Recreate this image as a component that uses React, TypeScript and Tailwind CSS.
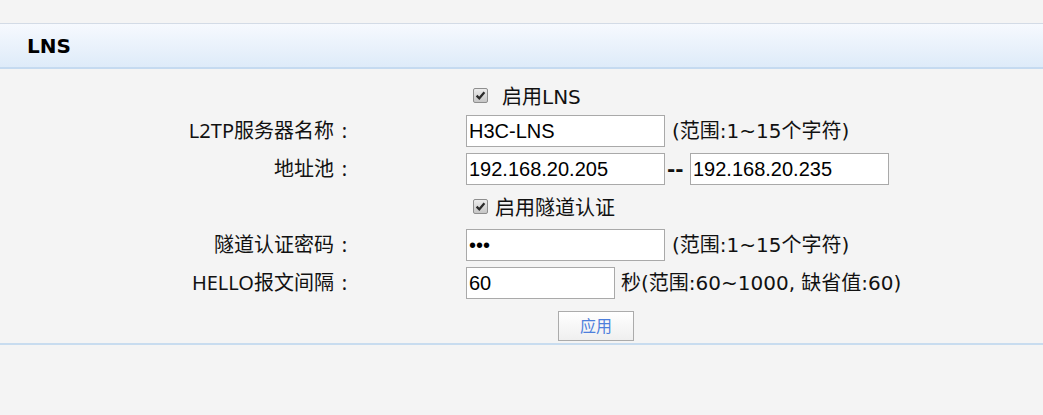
import React from "react";

const lbl = { fontFamily: '"Noto Sans", "Noto Sans CJK SC", sans-serif' };
const txt = { fontFamily: '"DejaVu Sans", "Noto Sans CJK SC", sans-serif' };
const inp = { fontFamily: '"Liberation Sans", "Noto Sans CJK SC", sans-serif' };

function Check() {
  return (
    <span className="inline-flex h-[15px] w-[15px] items-center justify-center rounded-[2px] border border-[#8e8e8e] bg-gradient-to-b from-[#ececec] to-[#c6c6c6]">
      <svg width="11" height="11" viewBox="0 0 11 11">
        <path d="M1.6 5.6 L4.3 8.3 L9.4 2.2" fill="none" stroke="#2a2a2a" strokeWidth="2.2" />
      </svg>
    </span>
  );
}

function Label({ children }: { children: React.ReactNode }) {
  return (
    <div
      className="flex w-[355px] shrink-0 justify-end text-[20px] leading-none text-[#111]"
      style={lbl}
    >
      <span>{children}</span>
      <span className="w-[21px] text-center">:</span>
    </div>
  );
}

function Input({ value, w = "w-[199px]" }: { value: string; w?: string }) {
  return (
    <div
      className={`${w} flex h-[32px] shrink-0 items-center border border-[#a9a9a9] bg-white pl-[2px] text-[20px] leading-none text-black`}
      style={inp}
    >
      {value}
    </div>
  );
}

export default function App() {
  return (
    <div className="min-h-[415px] w-full bg-[#f4f4f4] pt-[23px]">
      <div className="border-t border-[#d3dbe6]">
        <div className="flex h-[43px] items-center bg-gradient-to-b from-[#f6f9fe] to-[#deebf9] pl-[27px]">
          <span
            className="text-[20px] font-bold leading-none text-black"
            style={{ fontFamily: '"DejaVu Sans", sans-serif' }}
          >
            LNS
          </span>
        </div>
        <div className="h-[2px] bg-[#c5daf0]" />
      </div>

      <div className="flex flex-col">
        <div className="mt-[16px] flex h-[20px] items-center">
          <div className="w-[473px] shrink-0" />
          <Check />
          <span className="ml-[14px] mt-[3px] text-[20px] leading-none text-[#111]" style={txt}>
            启用LNS
          </span>
        </div>

        <div className="mt-[10px] flex h-[32px] items-center">
          <Label>L2TP服务器名称</Label>
          <div className="ml-[111px] flex items-center">
            <Input value="H3C-LNS" />
            <span className="ml-[7px] text-[20px] leading-none text-[#111]" style={txt}>
              (范围:1~15个字符)
            </span>
          </div>
        </div>

        <div className="mt-[6px] flex h-[32px] items-center">
          <Label>地址池</Label>
          <div className="ml-[111px] flex items-center">
            <Input value="192.168.20.205" />
            <span
              className="w-[25px] shrink-0 pl-[2px] text-[20px] font-bold leading-none text-[#111]"
              style={{ fontFamily: '"DejaVu Sans", sans-serif' }}
            >
              --
            </span>
            <Input value="192.168.20.235" />
          </div>
        </div>

        <div className="mt-[11px] flex h-[20px] items-center">
          <div className="w-[473px] shrink-0" />
          <Check />
          <span className="ml-[7px] mt-[3px] text-[20px] leading-none text-[#111]" style={txt}>
            启用隧道认证
          </span>
        </div>

        <div className="mt-[13px] flex h-[32px] items-center">
          <Label>隧道认证密码</Label>
          <div className="ml-[111px] flex items-center">
            <Input value="•••" />
            <span className="ml-[7px] text-[20px] leading-none text-[#111]" style={txt}>
              (范围:1~15个字符)
            </span>
          </div>
        </div>

        <div className="mt-[6px] flex h-[32px] items-center">
          <Label>HELLO报文间隔</Label>
          <div className="ml-[111px] flex items-center">
            <Input value="60" w="w-[149px]" />
            <span className="ml-[6px] text-[20px] leading-none text-[#111]" style={txt}>
              秒(范围:60~1000, 缺省值:60)
            </span>
          </div>
        </div>

        <div className="mt-[12px] flex">
          <div className="w-[558px] shrink-0" />
          <button
            className="flex h-[30px] w-[76px] items-center justify-center border border-[#ababab] bg-gradient-to-b from-[#ffffff] to-[#efefef] text-[16px] leading-none text-[#4d7fdc]"
            style={lbl}
          >
            应用
          </button>
        </div>

        <div className="mt-[2px] h-[2px] bg-[#c8dcef]" />
      </div>
    </div>
  );
}
